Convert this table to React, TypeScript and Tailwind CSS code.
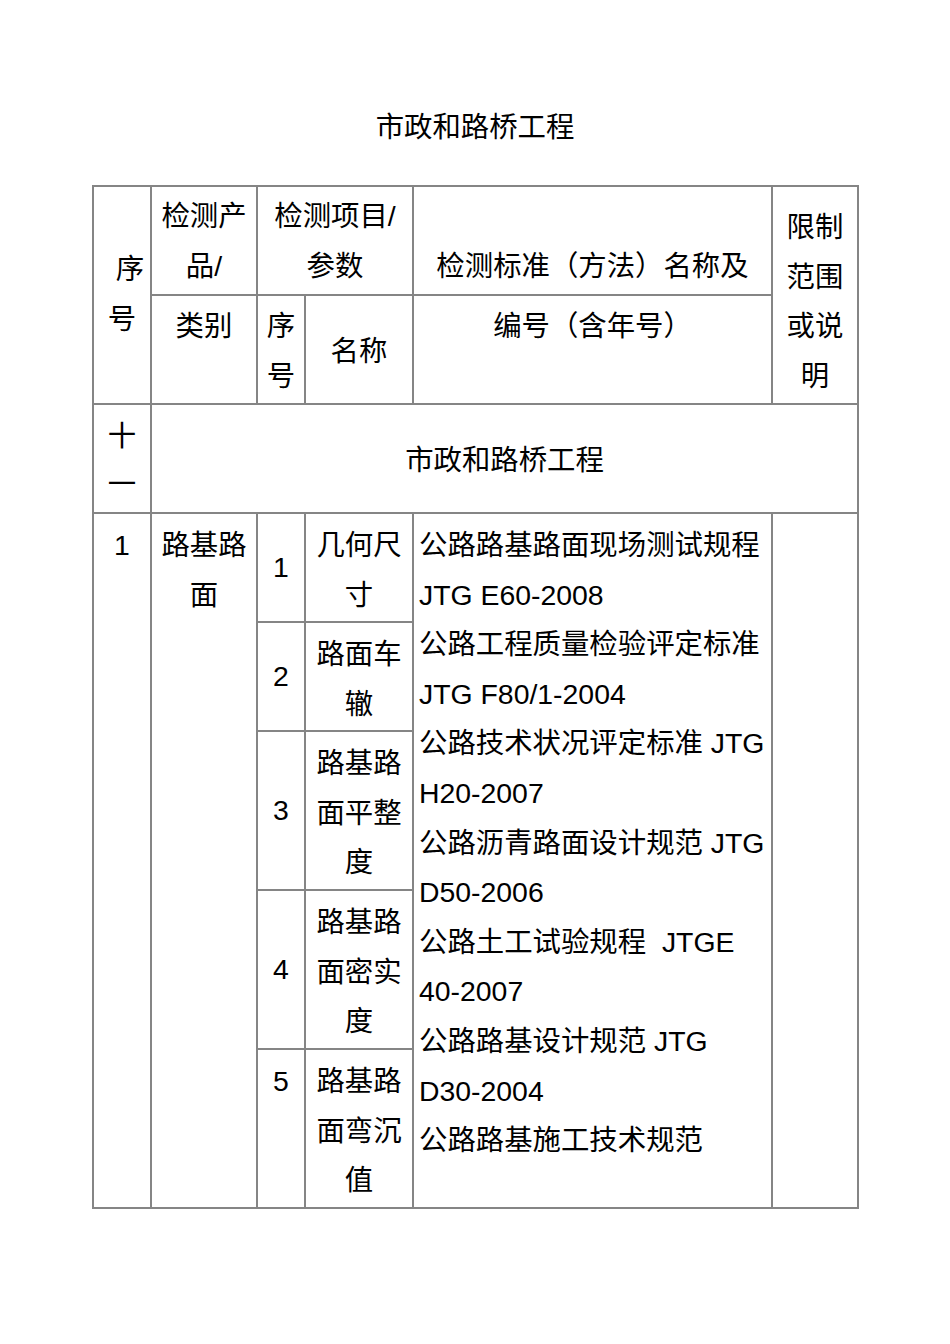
const FONT = "font-['Liberation_Sans','Noto_Sans_CJK_SC',sans-serif]"

function Lines({ items, className = '' }: { items: string[]; className?: string }) {
  return (
    <div className={className}>
      {items.map((t, i) => (
        <div key={i} className="whitespace-pre">
          {t}
        </div>
      ))}
    </div>
  )
}

// sub-rows of 检测项目/参数, rows 4..8 of the grid
const ITEMS = [
  { no: '1', name: ['几何尺', '寸'], row: 'row-start-4', top: false },
  { no: '2', name: ['路面车', '辙'], row: 'row-start-5', top: false },
  { no: '3', name: ['路基路', '面平整', '度'], row: 'row-start-6', top: false },
  { no: '4', name: ['路基路', '面密实', '度'], row: 'row-start-7', top: false },
  { no: '5', name: ['路基路', '面弯沉', '值'], row: 'row-start-8', top: true },
]

const STANDARDS = [
  '公路路基路面现场测试规程',
  'JTG E60-2008',
  '公路工程质量检验评定标准',
  'JTG F80/1-2004',
  '公路技术状况评定标准 JTG',
  'H20-2007',
  '公路沥青路面设计规范 JTG',
  'D50-2006',
  '公路土工试验规程  JTGE',
  '40-2007',
  '公路路基设计规范 JTG',
  'D30-2004',
  '公路路基施工技术规范',
]

export default function App() {
  return (
    <div className={`min-h-[1344px] w-full bg-white text-black ${FONT} text-[28.4px] leading-[49.6px]`}>
      <div className="pt-[102px] text-center leading-[50px]">市政和路桥工程</div>

      <div className="ml-[92px] mt-[33px] grid w-[767px] grid-cols-[56px_104px_46px_106px_357px_84px] grid-rows-[107px_107px_107px_107px_107px_157px_157px_157px] gap-[2px] bg-[#858585] p-[2px]">
        {/* header */}
        <div className="col-start-1 row-span-2 row-start-1 flex flex-col items-center justify-center bg-white">
          <div className="pl-[16px]">序</div>
          <div>号</div>
        </div>
        <div className="col-start-2 row-start-1 bg-white pt-[5px] text-center">
          <Lines items={['检测产', '品/']} />
        </div>
        <div className="col-span-2 col-start-3 row-start-1 bg-white pt-[5px] text-center">
          <Lines items={['检测项目/', '参数']} />
        </div>
        <div className="col-start-5 row-start-1 flex flex-col justify-end bg-white pb-[2px] text-center">
          检测标准（方法）名称及
        </div>
        <div className="col-start-6 row-span-2 row-start-1 bg-white pt-[16px] text-center">
          <Lines items={['限制', '范围', '或说', '明']} />
        </div>
        <div className="col-start-2 row-start-2 bg-white pt-[6px] text-center">类别</div>
        <div className="col-start-3 row-start-2 bg-white pt-[6px] text-center">
          <Lines items={['序', '号']} />
        </div>
        <div className="col-start-4 row-start-2 flex items-center justify-center bg-white pt-[4px]">名称</div>
        <div className="col-start-5 row-start-2 bg-white pt-[6px] text-center">编号（含年号）</div>

        {/* section 十一 */}
        <div className="col-start-1 row-start-3 bg-white pt-[7px] text-center leading-[48px]">
          <Lines items={['十', '一']} />
        </div>
        <div className="col-span-5 col-start-2 row-start-3 flex items-center justify-center bg-white pt-[5px]">
          市政和路桥工程
        </div>

        {/* category 1 */}
        <div className="col-start-1 row-span-5 row-start-4 bg-white pt-[7px] text-center">1</div>
        <div className="col-start-2 row-span-5 row-start-4 bg-white pt-[7px] text-center">
          <Lines items={['路基路', '面']} />
        </div>
        {ITEMS.map((it) => (
          <div key={it.no} className="contents">
            <div
              className={`col-start-3 ${it.row} flex justify-center bg-white ${
                it.top ? 'items-start pt-[7px]' : 'items-center'
              }`}
            >
              {it.no}
            </div>
            <div className={`col-start-4 ${it.row} bg-white pt-[7px] text-center`}>
              <Lines items={it.name} />
            </div>
          </div>
        ))}
        <div className="col-start-5 row-span-5 row-start-4 bg-white pl-[5px] pt-[7px]">
          <Lines items={STANDARDS} />
        </div>
        <div className="col-start-6 row-span-5 row-start-4 bg-white" />
      </div>
    </div>
  )
}
